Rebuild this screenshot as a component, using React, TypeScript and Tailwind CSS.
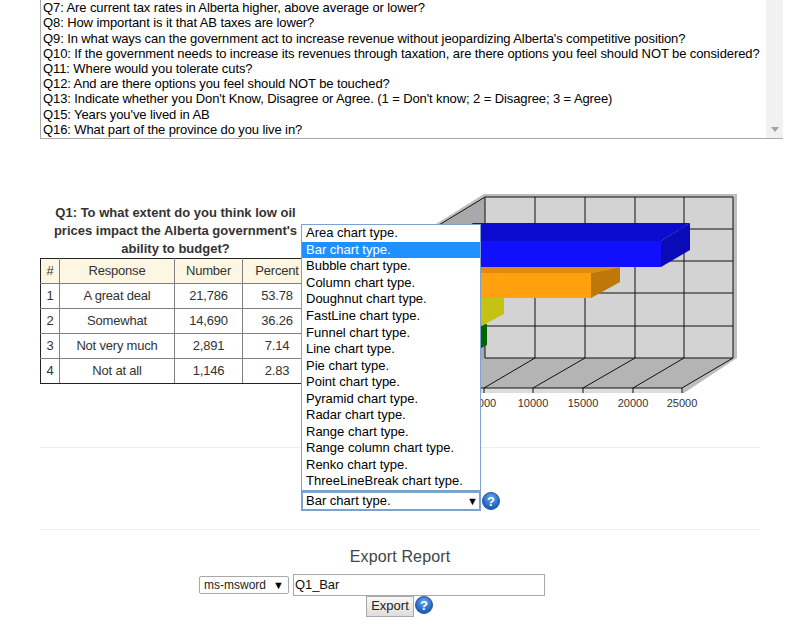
const questions = [
  "Q7: Are current tax rates in Alberta higher, above average or lower?",
  "Q8: How important is it that AB taxes are lower?",
  "Q9: In what ways can the government act to increase revenue without jeopardizing Alberta's competitive position?",
  "Q10: If the government needs to increase its revenues through taxation, are there options you feel should NOT be considered?",
  "Q11: Where would you tolerate cuts?",
  "Q12: And are there options you feel should NOT be touched?",
  "Q13: Indicate whether you Don't Know, Disagree or Agree. (1 = Don't know; 2 = Disagree; 3 = Agree)",
  "Q15: Years you've lived in AB",
  "Q16: What part of the province do you live in?",
];

const rows = [
  ["1", "A great deal", "21,786", "53.78"],
  ["2", "Somewhat", "14,690", "36.26"],
  ["3", "Not very much", "2,891", "7.14"],
  ["4", "Not at all", "1,146", "2.83"],
];

const chartTypes = [
  "Area", "Bar", "Bubble", "Column", "Doughnut", "FastLine", "Funnel", "Line",
  "Pie", "Point", "Pyramid", "Radar", "Range", "Range column", "Renko", "ThreeLineBreak",
];

const HelpIcon = () => (
  <div className="flex h-[18px] w-[18px] items-center justify-center rounded-full border border-[#1c4f9c] bg-[radial-gradient(circle_at_50%_30%,#6aa8ec,#1a62c4_70%)] text-[13px] leading-none font-bold text-white">
    ?
  </div>
);

const Chart = () => {
  const backX = [535, 585, 635, 684];
  const frontX = [484, 533, 583, 633, 682];
  return (
    <svg viewBox="311 190 430 225" className="h-[225px] w-[430px] shrink-0">
      <polygon points="436,224 484,194 737,194 737,358 684,393 436,393" fill="#bdbdbd" />
      <polygon points="434,228 485,197 485,358 434,388" fill="#a9a9a9" />
      <rect x="485" y="197" width="248" height="161" fill="#d3d3d3" />
      <polygon points="485,358 733,358 682,388 434,388" fill="#b4b4b4" />
      <polygon points="434,388 682,388 682,393 434,393" fill="#dcdcdc" />
      <g stroke="#111" strokeWidth="1" fill="none">
        <path d="M434,228 L485,197 H733 V358 L682,388 H434" />
        <path d="M485,197 V358 H733" />
        <path d="M485,229 H733 M485,261 H733 M485,293 H733 M485,326 H733" />
        {backX.map((x) => (
          <path key={x} d={`M${x},197 V358`} />
        ))}
        {frontX.slice(0, 4).map((x, i) => (
          <path key={x} d={`M${backX[i]},358 L${x},388`} />
        ))}
        {frontX.map((x) => (
          <path key={x} d={`M${x},388 V393`} />
        ))}
      </g>
      <polygon points="473,223 690,223 661,241 444,241" fill="#0c0cd0" />
      <rect x="444" y="241" width="217" height="26" fill="#1010ff" />
      <polygon points="661,241 690,223 690,250 661,267" fill="#0a0ab8" />
      <polygon points="444,267 620,267 591,273 444,273" fill="#dd8c0c" />
      <rect x="444" y="273" width="147" height="25" fill="#ffa00f" />
      <polygon points="591,273 620,267 620,282 591,298" fill="#bd7808" />
      <polygon points="470,298 504,298 504,314 470,332" fill="#c4c212" />
      <polygon points="470,330 487,324 487,345 470,354" fill="#006600" />
      <g fontFamily="'Liberation Sans', sans-serif" fontSize="11" fill="#333" textAnchor="middle">
        <text x="484" y="407">5000</text>
        <text x="533" y="407">10000</text>
        <text x="583" y="407">15000</text>
        <text x="633" y="407">20000</text>
        <text x="682" y="407">25000</text>
      </g>
    </svg>
  );
};

export default function App() {
  return (
    <div className="h-[628px] w-[795px] overflow-hidden bg-white font-['Liberation_Sans',Arial,sans-serif] text-[13px] text-[#222]">
      <div className="ml-[40px] flex h-[139px] w-[743px] border-b border-l border-[#a9a9a9]">
        <div className="flex min-w-0 flex-1 flex-col justify-end pb-[1px] pl-[2px] text-[13px] leading-[15.2px] tracking-[-0.1px] whitespace-nowrap text-black">
          {questions.map((q) => (
            <div key={q}>{q}</div>
          ))}
        </div>
        <div className="flex w-[17px] shrink-0 flex-col justify-end bg-[#f1f1f1] pb-[6px]">
          <div className="mx-auto h-0 w-0 border-x-[4px] border-t-[5px] border-x-transparent border-t-[#a3a3a3]" />
        </div>
      </div>

      <div className="mt-[51px] ml-[40px] flex h-[225px]">
        <div className="w-[271px] shrink-0 pt-[14px]">
          <div className="text-center text-[13px] leading-[18px] font-bold text-[#333]">
            Q1: To what extent do you think low oil prices impact the Alberta government's ability to budget?
          </div>
          <table className="w-[271px] table-fixed border-collapse text-center text-[13px] tracking-[-0.2px] text-[#333]">
            <colgroup>
              <col className="w-[19px]" />
              <col className="w-[115px]" />
              <col className="w-[68px]" />
              <col className="w-[69px]" />
            </colgroup>
            <thead>
              <tr className="h-[25px] bg-[#fdf6e3]">
                {["#", "Response", "Number", "Percent"].map((h, i) => (
                  <th
                    key={h}
                    className={
                      i === 0
                        ? "border border-[#808080] border-t-[#222] border-l-[#222] font-normal"
                        : "border border-[#808080] border-t-[#222] font-normal"
                    }
                  >
                    {h}
                  </th>
                ))}
              </tr>
            </thead>
            <tbody>
              {rows.map((row, r) => (
                <tr key={row[0]} className={r === 3 ? "h-[25px] [&>td]:border-b-[#222]" : "h-[25px]"}>
                  {row.map((cell, i) => (
                    <td
                      key={i}
                      className={
                        i === 0
                          ? "border border-[#808080] border-l-[#222]"
                          : "border border-[#808080]"
                      }
                    >
                      {cell}
                    </td>
                  ))}
                </tr>
              ))}
            </tbody>
          </table>
        </div>
        <Chart />
      </div>

      <div className="mt-[32px] ml-[40px] h-px w-[720px] bg-[#eeeeee]" />

      <div className="mt-[43px] ml-[301px] flex h-[20px] items-center gap-[1px]">
        <div className="relative flex h-[20px] w-[180px] items-center justify-between border-2 border-[#7da2ce] pr-[1px] pl-[3px] text-black">
          <span>Bar chart type.</span>
          <span className="text-[11px]">▼</span>
          <div className="absolute bottom-[18px] -left-[2px] w-[180px] border border-[#7da2ce] bg-white">
            {chartTypes.map((t) => (
              <div
                key={t}
                className={
                  t === "Bar"
                    ? "h-[16.55px] bg-[#1e90ff] pl-[4px] leading-[16.55px] text-white"
                    : "h-[16.55px] pl-[4px] leading-[16.55px] text-black"
                }
              >
                {t} chart type.
              </div>
            ))}
          </div>
        </div>
        <HelpIcon />
      </div>

      <div className="mt-[18px] ml-[40px] h-px w-[720px] bg-[#eeeeee]" />

      <div className="mt-[17px] pl-[5px] text-center text-[16px] leading-[20px] tracking-[0.15px] text-[#444]">Export Report</div>

      <div className="mt-[7px] ml-[199px] flex items-center gap-[4px]">
        <div className="flex h-[18px] w-[90px] items-center justify-between rounded-[2px] border border-[#a9a9a9] pr-[4px] pl-[4px] text-[12px] whitespace-nowrap text-[#222]">
          <span>ms-msword</span>
          <span className="text-[11px] text-black">▼</span>
        </div>
        <div className="flex h-[22px] w-[252px] items-center border border-[#a9a9a9] pl-[1px] tracking-[-0.1px] text-[#111]">Q1_Bar</div>
      </div>

      <div className="ml-[366px] flex items-start gap-[1px]">
        <div className="flex h-[21px] w-[48px] items-center justify-center border border-[#a9a9a9] bg-[linear-gradient(#f8f8f8,#dddddd)] pb-[1px] text-[#222]">
          Export
        </div>
        <HelpIcon />
      </div>
    </div>
  );
}
